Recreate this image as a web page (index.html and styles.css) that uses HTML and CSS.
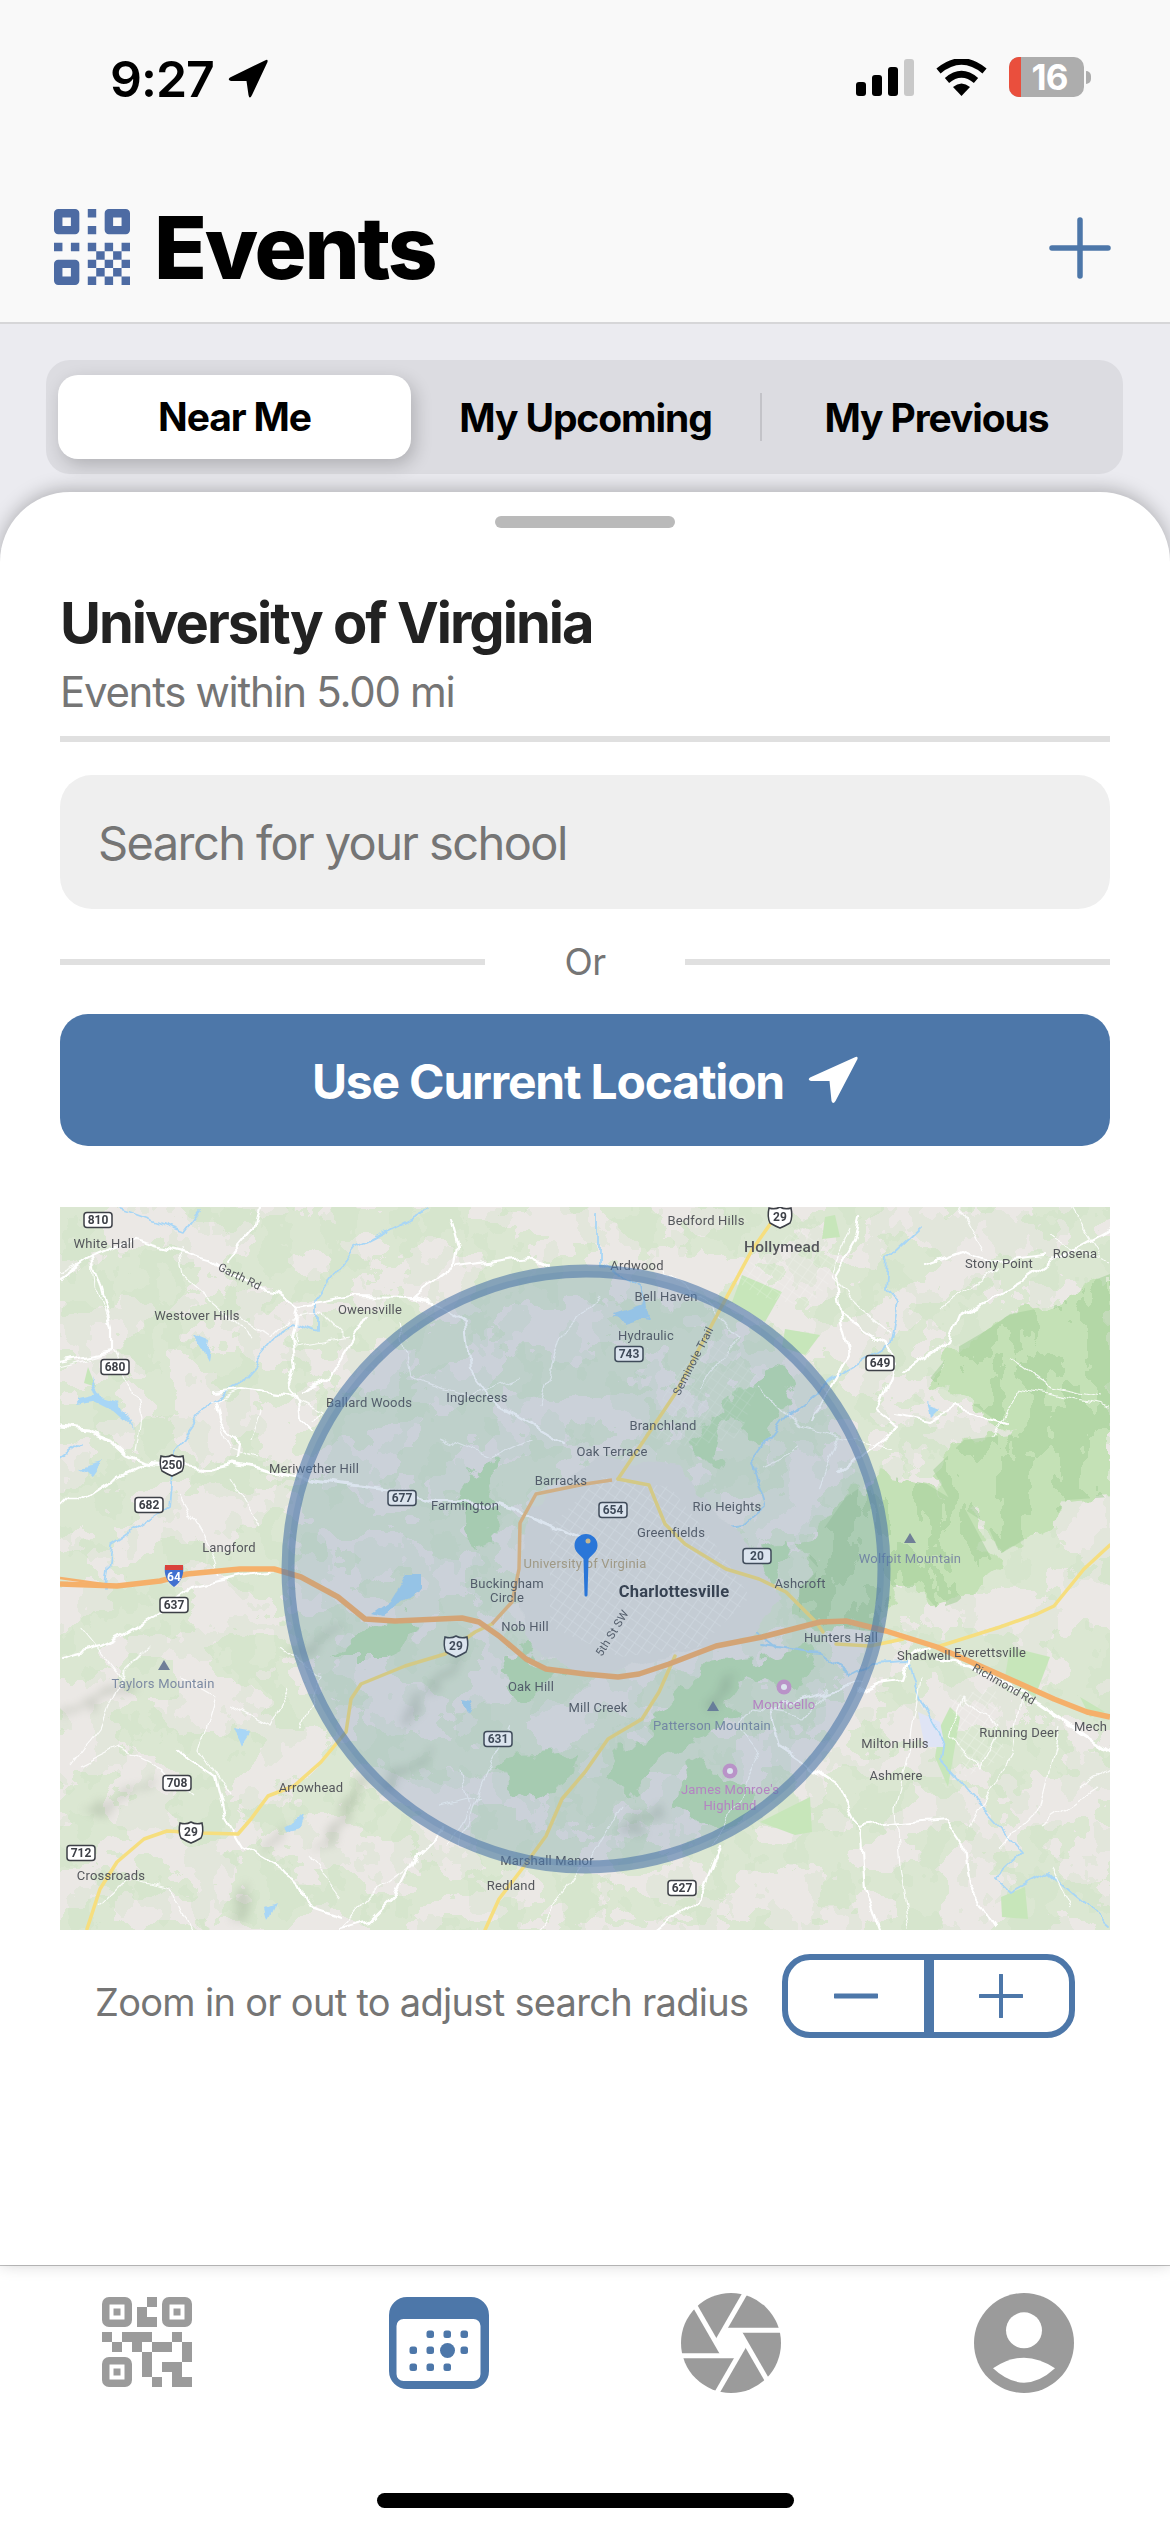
FILE: index.html
```html
<!DOCTYPE html>
<html lang="en">
<head>
    <meta charset="UTF-8">
    <meta name="viewport" content="width=device-width, initial-scale=1.0">
    <title>Events</title>
    <link rel="stylesheet" href="styles.css">
</head>
<body>
    <div class="top-bar">
        <div class="status-bar">
            <div class="status-time">
                <span>9:27</span>
                <svg class="status-arrow" viewBox="0 0 40 40"><path d="M38 1 Q40 0 39.500 3 L24 36 Q21.500 41 20.500 36 L18.500 22 L3 22 Q-1 21 2 18.500 Z"/></svg>
            </div>
            <div class="status-icons">
                <svg class="signal" viewBox="0 0 58 37">
                    <rect x="0" y="23" width="10" height="14" rx="3"/>
                    <rect x="16" y="16" width="10" height="21" rx="3"/>
                    <rect x="32" y="8" width="10" height="29" rx="3"/>
                    <rect x="48" y="0" width="10" height="37" rx="3" fill="#c9c9c9"/>
                </svg>
                <svg class="wifi" viewBox="0 0 51 37">
                    <path d="M2.500 12 Q25.500 -7 48.500 12" fill="none" stroke="#000" stroke-width="6.500"/>
                    <path d="M11 21.500 Q25.500 9 40 21.500" fill="none" stroke="#000" stroke-width="6.500"/>
                    <path d="M17 28 Q25.500 21 34 28 L25.500 37 Z"/>
                </svg>
                <div class="battery">
                    <div class="battery-body"><span class="battery-low"></span><span class="battery-num">16</span></div>
                    <span class="battery-nub"></span>
                </div>
            </div>
        </div>
        <div class="title-row">
            <div class="title-left">
                <svg class="logo" viewBox="0 0 9 9">
                    <path fill-rule="evenodd" d="M.5 0h2a.5.5 0 0 1 .5.5v2a.5.500 0 0 1-.5.5h-2a.5.5 0 0 1-.5-.5v-2a.5.5 0 0 1 .5-.5zM1 1v1h1V1z"/>
                    <path fill-rule="evenodd" d="M6.500 0h2a.5.5 0 0 1 .5.5v2a.5.500 0 0 1-.5.5h-2a.5.5 0 0 1-.5-.5v-2a.5.5 0 0 1 .5-.5zM7 1v1h1V1z"/>
                    <path fill-rule="evenodd" d="M.5 6h2a.5.5 0 0 1 .5.5v2a.5.500 0 0 1-.5.5h-2a.5.5 0 0 1-.5-.5v-2a.5.5 0 0 1 .5-.5zM1 7v1h1V7z"/>
                    <path d="M4 0h1v1H4zM4 2h1v1H4zM0 4h1v1H0zM2 4h1v1H2zM4 4h1v1H4zM6 4h1v1H6zM8 4h1v1H8zM5 5h1v1H5zM7 5h1v1H7zM4 6h1v1H4zM6 6h1v1H6zM8 6h1v1H8zM5 7h1v1H5zM7 7h1v1H7zM4 8h1v1H4zM6 8h1v1H6zM8 8h1v1H8z"/>
                </svg>
                <h1>Events</h1>
            </div>
            <svg class="add-icon" viewBox="0 0 62 62"><path d="M31 3V59M3 31H59" fill="none" stroke="#4d77a9" stroke-width="5.500" stroke-linecap="round"/></svg>
        </div>
    </div>

    <div class="segment-wrap">
        <div class="segment">
            <div class="segment-item active">Near Me</div>
            <div class="segment-item upcoming">My Upcoming</div>
            <span class="segment-divider"></span>
            <div class="segment-item previous">My Previous</div>
        </div>
    </div>

    <div class="sheet">
        <div class="handle"></div>
        <h2>University of Virginia</h2>
        <p class="radius-text">Events within 5.00 mi</p>
        <div class="rule"></div>
        <div class="search-box">Search for your school</div>
        <div class="or-row">
            <span class="or-line"></span>
            <span class="or-text">Or</span>
            <span class="or-line"></span>
        </div>
        <button class="location-btn">
            <span>Use Current Location</span>
            <svg class="nav-arrow" viewBox="0 0 50 48"><path d="M47.500 1 Q50 0 49.500 3 L27.500 45 Q25 49 23.500 45 L21.500 25 L3 25 Q-1 24 2 21.500 Z"/></svg>
        </button>

        <svg class="map" viewBox="0 0 1050 723">
            <defs>
                <filter id="patches" filterUnits="userSpaceOnUse" x="0" y="0" width="1050" height="723" color-interpolation-filters="sRGB">
                    <feTurbulence type="fractalNoise" baseFrequency="0.017 0.021" numOctaves="4" seed="11"/>
                    <feColorMatrix values="0 0 0 0 0.86  0 0 0 0 0.906  0 0 0 0 0.825  1 0 0 0 0"/>
                    <feComponentTransfer><feFuncA type="discrete" tableValues="0 1"/></feComponentTransfer>
                </filter>
                <filter id="patches-deep" filterUnits="userSpaceOnUse" x="0" y="0" width="1050" height="723" color-interpolation-filters="sRGB">
                    <feTurbulence type="fractalNoise" baseFrequency="0.03 0.024" numOctaves="4" seed="23"/>
                    <feColorMatrix values="0 0 0 0 0.78  0 0 0 0 0.87  0 0 0 0 0.74  1.2 0 0 0 -0.15"/>
                    <feComponentTransfer><feFuncA type="discrete" tableValues="0 0.25"/></feComponentTransfer>
                </filter>
                <filter id="forest-tone" filterUnits="userSpaceOnUse" x="0" y="0" width="1050" height="723" color-interpolation-filters="sRGB">
                    <feTurbulence type="fractalNoise" baseFrequency="0.035 0.02" numOctaves="4" seed="7"/>
                    <feColorMatrix values="0 0 0 0 0.66  0 0 0 0 0.82  0 0 0 0 0.61  1 0 0 0 0"/>
                    <feComponentTransfer><feFuncA type="discrete" tableValues="0 0.6"/></feComponentTransfer>
                </filter>
                <filter id="rough" filterUnits="userSpaceOnUse" x="0" y="0" width="1050" height="723" color-interpolation-filters="sRGB">
                    <feTurbulence type="fractalNoise" baseFrequency="0.04" numOctaves="3" seed="5" result="n"/>
                    <feDisplacementMap in="SourceGraphic" in2="n" scale="34" xChannelSelector="R" yChannelSelector="G"/>
                </filter>
                <filter id="wiggle" filterUnits="userSpaceOnUse" x="0" y="0" width="1050" height="723" color-interpolation-filters="sRGB">
                    <feTurbulence type="fractalNoise" baseFrequency="0.045" numOctaves="2" seed="9" result="n"/>
                    <feDisplacementMap in="SourceGraphic" in2="n" scale="14" xChannelSelector="R" yChannelSelector="G"/>
                </filter>
                <filter id="shade" filterUnits="userSpaceOnUse" x="0" y="0" width="1050" height="723" color-interpolation-filters="sRGB">
                    <feTurbulence type="fractalNoise" baseFrequency="0.05" numOctaves="3" seed="3" result="n"/>
                    <feDisplacementMap in="SourceGraphic" in2="n" scale="26" xChannelSelector="R" yChannelSelector="G"/>
                    <feGaussianBlur stdDeviation="4"/>
                </filter>
                <filter id="soft"><feGaussianBlur stdDeviation="0.5"/></filter>
                <pattern id="grid" width="9" height="9" patternUnits="userSpaceOnUse" patternTransform="rotate(35)">
                    <path d="M0 0H9M0 0V9" stroke="#fff" stroke-width="1.200"/>
                </pattern>
                <clipPath id="forest-clip">
                    <path d="M927 123L950 107L1001 97L1024 77L1050 67V290L1007 293L991 317L940 347L927 317L890 293L873 263L904 233L954 227L917 200L863 180L893 143Z"/>
                    <path d="M820 267L867 277L904 300L937 362L923 372L897 395L877 402L860 382L837 382L820 425L759 419L739 405L739 382L759 362L733 333L760 327L786 290Z"/>
                </clipPath>
                <g id="rd"><rect x="-14" y="-7.500" width="28" height="15" rx="3" fill="#fff" stroke="#3c3f46" stroke-width="1.500"/></g>
                <g id="us"><path d="M-11 -9Q-5 -7 0 -10Q5 -7 11 -9Q13 0 10 6Q5 9 0 11Q-5 9 -10 6Q-13 0 -11 -9Z" fill="#fff" stroke="#3c3f46" stroke-width="1.500"/></g>
                <g id="peak"><path d="M-6 4L0 -6L6 4Z" fill="#6f7f97"/></g>
                <g id="poi"><circle r="7.500" fill="#d59ad0"/><circle r="3" fill="#fff"/></g>
            </defs>

            <g filter="url(#soft)">
                <rect width="1050" height="723" fill="#ebe8e5"/>
                <rect width="1050" height="723" filter="url(#patches)"/>
                <rect width="1050" height="723" filter="url(#patches-deep)"/>

                <!-- forests -->
                <g filter="url(#rough)" fill="#c4e1b6">
                    <path d="M927 123L950 107L1001 97L1024 77L1050 67V290L1007 293L991 317L940 347L927 317L890 293L873 263L904 233L954 227L917 200L863 180L893 143Z"/>
                    <path d="M820 267L867 277L904 300L937 362L923 372L897 395L877 402L860 382L837 382L820 425L759 419L739 405L739 382L759 362L733 333L760 327L786 290Z"/>
                </g>
                <rect width="1050" height="723" clip-path="url(#forest-clip)" filter="url(#forest-tone)"/>
                <g filter="url(#rough)" fill="#bde0b3">
                    <path d="M445 552L520 545L510 575L470 593L432 560Z"/>
                    <path d="M545 565L610 500L650 455L745 445L762 460L720 480L690 470L660 490L680 510L640 530L600 550L570 595Z"/>
                    <path d="M630 555L695 585L680 620L610 600Z"/>
                    <path d="M330 450L365 415L345 405L295 430L270 450Z"/>
                    <path d="M455 440L500 465L475 495L445 470Z"/>
                    <path d="M630 240L670 190L720 160L735 185L700 240L665 215L650 260Z"/>
                    <path d="M400 290L430 250L440 310L415 345Z"/>
                    <path d="M695 360L720 330L730 350L715 380Z"/>
                </g>
                <g fill="#c7e6ba">
                    <path d="M682 68L722 85L705 115L672 95Z"/>
                    <path d="M725 122L760 128L745 148L722 140Z"/>
                    <path d="M765 10L775 8L780 30L762 32Z"/>
                    <path d="M700 615L750 590L752 625L735 628Z"/>
                    <path d="M941 690L965 680L968 712L942 710Z"/>
                    <path d="M880 520L890 500L900 510L888 580L875 550Z"/>
                    <path d="M950 440L990 450L975 490L945 470Z"/>
                    <path d="M1020 490L1045 505L1030 510Z"/>
                    <path d="M28 160L36 180L24 176Z"/>
                </g>

                <!-- hill shading -->
                <g filter="url(#shade)" fill="none" stroke="#75846e" stroke-linecap="round" opacity="0.24">
                    <path d="M305 570L262 640" stroke-width="10"/>
                    <path d="M370 545L325 580" stroke-width="9"/>
                    <path d="M345 515L400 450" stroke-width="8"/>
                    <path d="M235 450L280 420" stroke-width="9"/>
                    <path d="M0 510L70 480" stroke-width="9"/>
                    <path d="M600 600L565 625" stroke-width="10"/>
                    <path d="M650 505L668 475" stroke-width="9"/>
                    <path d="M180 710L185 680" stroke-width="7"/>
                    <path d="M30 605L90 575" stroke-width="7"/>
                    <path d="M230 620L210 640" stroke-width="6"/>
                </g>

                <!-- water -->
                <g fill="#a8d6f6" filter="url(#wiggle)">
                    <path d="M30 166L44 190L60 195L72 220L55 205L35 195L15 198L20 192L38 188Z"/>
                    <path d="M133 127L150 134L147 153L140 140Z"/>
                    <path d="M312 405L330 392L345 368L362 368L362 382L340 396L322 408Z"/>
                    <path d="M175 520L192 523L182 538Z"/>
                    <path d="M224 618L242 608L238 622L226 625Z"/>
                    <path d="M18 262L42 256L32 270Z"/>
                    <path d="M400 490L414 492L408 508Z"/>
                    <path d="M868 195L880 200L872 208Z"/>
                    <path d="M205 700L215 696L208 712Z"/>
                    <path d="M536 370L548 365L544 380Z"/>
                    <path d="M555 105L585 95L590 110L565 118Z"/>
                </g>
                <path d="M858 505L880 515L885 540L865 540Z" fill="#dfe4f5"/>
                <g fill="none" stroke="#a8d6f6" stroke-width="1.800" stroke-linejoin="round" stroke-linecap="round" filter="url(#wiggle)">
                    <path d="M702 437L759 445L790 469L813 457L847 455L860 489L883 532L880 552L904 579L964 645L935 672L950 685L987 665L1050 719"/>
                    <path d="M538 10L538 57L582 80L589 113L555 108"/>
                    <path d="M860 20L828 50L826 83L838 97L830 137L770 173L726 210L692 257L706 300L682 320L659 323L639 310"/>
                    <path d="M368 3L295 40L255 93L255 123L232 113L180 175L150 195L115 245"/>
                    <path d="M55 0L125 25L140 5"/>
                    <path d="M680 380L690 420L715 440"/>
                    <path d="M0 250L20 235M115 245L110 300L50 340L45 380"/>
                </g>

                <!-- city -->
                <path d="M470 300L540 250L620 260L650 300L690 340L720 390L690 430L600 450L530 470L470 440L455 380Z" fill="#e3e2df" filter="url(#wiggle)"/>
                <path d="M490 320L540 270L610 280L650 330L690 390L640 440L560 450L490 420Z" fill="url(#grid)" opacity="0.55"/>
                <path d="M610 170L660 130L700 170L680 230L630 240L590 230Z" fill="url(#grid)" opacity="0.3"/>
                <path d="M670 70L740 20L790 50L750 100L700 90Z" fill="url(#grid)" opacity="0.3"/>
                <path d="M890 490L935 480L945 550L905 570Z" fill="url(#grid)" opacity="0.4"/>

                <!-- minor roads -->
                <g fill="none" stroke="#fff" stroke-width="1.200" stroke-linejoin="round" opacity="0.85" filter="url(#wiggle)">
                    <path d="M0 66L33 50L35 80L52 120L52 145L20 155L0 160"/>
                    <path d="M52 145L75 190L80 210L75 245"/>
                    <path d="M120 40L125 70L160 100L190 130"/>
                    <path d="M180 110L210 130L230 110M232 110L260 105L285 130"/>
                    <path d="M290 130L235 140L238 99"/>
                    <path d="M150 195L180 182L230 190L260 205L255 215"/>
                    <path d="M160 215L170 240L195 250M200 200L190 235"/>
                    <path d="M120 290L150 340L160 370M170 270L200 320"/>
                    <path d="M20 560L60 540L100 560L135 590"/>
                    <path d="M120 470L155 490L140 540L170 590"/>
                    <path d="M340 115L350 170L410 190L460 170M380 230L430 250L470 230"/>
                    <path d="M790 20L770 70L800 100L830 125"/>
                    <path d="M950 150L990 180L1040 190M880 100L940 60"/>
                    <path d="M930 230L960 180L1050 200M900 0L925 45"/>
                    <path d="M990 30L1050 55M1010 0L1040 50"/>
                    <path d="M860 470L850 540L835 600L840 660L850 723"/>
                    <path d="M960 490L950 550L910 620M1000 520L980 600L940 640M1020 580L1050 560"/>
                    <path d="M940 520L920 560L890 530L905 490Z"/>
                    <path d="M770 480L745 510L690 500L680 520M680 520L700 545L680 590L650 640"/>
                    <path d="M400 560L410 600L390 640M350 660L310 690L280 723"/>
                    <path d="M560 600L530 650L500 690L480 723"/>
                    <path d="M980 620L1040 580M990 660L1010 700"/>
                    <path d="M450 520L420 580L400 640M420 590L380 600"/>
                    <path d="M600 60L640 90L680 130L640 180M540 90L500 130L480 200"/>
                    <path d="M700 180L740 220L780 230L760 280M700 260L740 240M780 230L830 240"/>
                    <path d="M20 420L60 470L40 520L10 560M60 470L90 440"/>
                    <path d="M220 440L260 470L240 520M170 500L210 520L230 480"/>
                    <path d="M40 700L70 670L110 680L130 723M250 650L280 690"/>
                </g>

                <!-- main white roads -->
                <g fill="none" stroke="#fff" stroke-width="2.200" stroke-linejoin="round" stroke-linecap="round" filter="url(#wiggle)">
                    <path d="M877 454L910 459L977 495L1050 545" stroke-width="3"/>
                    <path d="M0 220L27 223L50 232L67 248L84 256L151 262L174 257L234 270L328 283L375 295L435 297L469 308L525 333" stroke-width="3"/>
                    <path d="M0 295L17 295L44 277L84 257" stroke-width="2.500"/>
                    <path d="M72 32L114 43L151 53L198 82L218 85L238 99L291 89L355 90L375 95L405 113L410 164L435 198L503 238"/>
                    <path d="M0 72L30 50L72 32M33 50L52 120L52 145M0 155L52 145"/>
                    <path d="M238 99L232 130L236 165L230 180L238 195L240 210L255 225"/>
                    <path d="M240 185L270 172L290 140L308 110M152 185L180 182L205 186L235 190"/>
                    <path d="M155 195L160 215L180 235L178 250"/>
                    <path d="M168 53L195 20L200 0"/>
                    <path d="M355 90L395 60L398 40L390 10M398 60L470 50L490 60"/>
                    <path d="M132 380L100 405L60 430L40 440L0 450"/>
                    <path d="M132 380L200 365L225 362"/>
                    <path d="M120 545L155 570L165 610L183 640L235 670L250 700L280 710"/>
                    <path d="M280 723L310 715L335 690L355 650L385 620"/>
                    <path d="M805 475L770 485L720 497L710 505L720 540L780 580L800 620L830 615L885 610L905 640L910 680L935 720"/>
                    <path d="M800 620L805 680L820 723"/>
                    <path d="M800 485L820 475L842 472L850 450L870 440"/>
                    <path d="M752 215L790 145L780 105L825 135L835 155"/>
                    <path d="M835 155L815 205L835 220L800 250L778 265"/>
                    <path d="M835 205L870 212L895 200L945 215"/>
                    <path d="M845 165L890 135L900 110L960 75L990 55L1050 22"/>
                    <path d="M865 58L900 45L930 55L985 48"/>
                    <path d="M780 105L775 70L795 35L800 10"/>
                    <path d="M590 730L640 690L660 640"/>
                </g>

                <!-- yellow roads and the interstate -->
                <g fill="none" stroke="#f6de7e" stroke-width="3.500" stroke-linejoin="round" stroke-linecap="round">
                    <path d="M432 417L415 425L385 447L345 459L301 477L291 492L286 525L261 555L234 579L208 589L191 612L178 627L141 626L107 624L84 632L57 655L40 682L27 722"/>
                    <path d="M558 272L615 187L649 123L692 43L713 13"/>
                    <path d="M558 272L589 278L605 317L625 337L666 362L699 372L726 385L756 415L763 425"/>
                    <path d="M776 437L810 439L843 432"/>
                    <path d="M880 439L940 420L977 407L994 399L1024 362L1050 338"/>
                    <path d="M615 449L599 485L582 512L548 532L525 565L502 592L486 629L462 662L439 692L425 723"/>
                </g>
                <path d="M432 417L452 395L459 362L460 316L476 287L525 277L552 273" fill="none" stroke="#f2bd7c" stroke-width="3.500" stroke-linejoin="round"/>
                <path d="M0 377L57 379L100 374L127 367L180 362L214 362L221 364L241 370L278 390L305 412L335 414L402 411L419 415L439 429L466 452L486 462L525 467L558 470L579 467L609 457L656 439L702 430L760 415L786 414L826 424L877 440L927 462L994 492L1027 505L1050 510" fill="none" stroke="#f5b06b" stroke-width="5.500" stroke-linejoin="round"/>
                <path d="M0 371L57 379" fill="none" stroke="#f5b06b" stroke-width="2.500"/>

                <!-- labels -->
                <g class="map-label">
                    <text x="44" y="41">White Hall</text>
                    <text x="178" y="73" class="small" transform="rotate(26 178 73)">Garth Rd</text>
                    <text x="137" y="113">Westover Hills</text>
                    <text x="310" y="107">Owensville</text>
                    <text x="309" y="200">Ballard Woods</text>
                    <text x="417" y="195">Inglecress</text>
                    <text x="254" y="266">Meriwether Hill</text>
                    <text x="405" y="303">Farmington</text>
                    <text x="169" y="345">Langford</text>
                    <text x="501" y="278">Barracks</text>
                    <text x="646" y="18">Bedford Hills</text>
                    <text x="722" y="45" class="big">Hollymead</text>
                    <text x="577" y="63">Ardwood</text>
                    <text x="606" y="94">Bell Haven</text>
                    <text x="586" y="133">Hydraulic</text>
                    <text x="939" y="61">Stony Point</text>
                    <text x="1015" y="51">Rosena</text>
                    <text x="603" y="223">Branchland</text>
                    <text x="552" y="249">Oak Terrace</text>
                    <text x="667" y="304">Rio Heights</text>
                    <text x="611" y="330">Greenfields</text>
                    <text x="633" y="158" class="small" transform="rotate(-63 633 154)">Seminole Trail</text>
                    <text x="447" y="381">Buckingham</text>
                    <text x="447" y="395">Circle</text>
                    <text x="465" y="424">Nob Hill</text>
                    <text x="471" y="484">Oak Hill</text>
                    <text x="538" y="505">Mill Creek</text>
                    <text x="251" y="585">Arrowhead</text>
                    <text x="51" y="673">Crossroads</text>
                    <text x="487" y="658">Marshall Manor</text>
                    <text x="451" y="683">Redland</text>
                    <text x="614" y="390" class="city">Charlottesville</text>
                    <text x="740" y="381">Ashcroft</text>
                    <text x="552" y="430" class="small" transform="rotate(-58 552 426)">5th St SW</text>
                    <text x="781" y="435">Hunters Hall</text>
                    <text x="864" y="453">Shadwell</text>
                    <text x="930" y="450">Everettsville</text>
                    <text x="944" y="481" class="small" transform="rotate(30 944 477)">Richmond Rd</text>
                    <text x="835" y="541">Milton Hills</text>
                    <text x="959" y="530">Running Deer</text>
                    <text x="1014" y="524" class="start">Mech</text>
                    <text x="836" y="573">Ashmere</text>
                    <text x="103" y="481" class="peak-label">Taylors Mountain</text>
                    <text x="850" y="356" class="peak-label">Wolfpit Mountain</text>
                    <text x="652" y="523" class="peak-label">Patterson Mountain</text>
                    <text x="724" y="502" class="poi-label">Monticello</text>
                    <text x="670" y="587" class="poi-label">James Monroe's</text>
                    <text x="670" y="603" class="poi-label">Highland</text>
                    <text x="525" y="361" class="campus-label">University of Virginia</text>
                </g>
                <use href="#peak" x="104" y="459"/>
                <use href="#peak" x="850" y="332"/>
                <use href="#peak" x="653" y="500"/>
                <use href="#poi" x="724" y="480"/>
                <use href="#poi" x="670" y="564"/>

                <!-- road shields -->
                <g class="shield-label">
                    <use href="#rd" x="38" y="13"/><text x="38" y="17">810</text>
                    <use href="#rd" x="55" y="160"/><text x="55" y="164">680</text>
                    <use href="#rd" x="89" y="298"/><text x="89" y="302">682</text>
                    <use href="#rd" x="342" y="291"/><text x="342" y="295">677</text>
                    <use href="#rd" x="569" y="147"/><text x="569" y="151">743</text>
                    <use href="#rd" x="820" y="156"/><text x="820" y="160">649</text>
                    <use href="#rd" x="553" y="303"/><text x="553" y="307">654</text>
                    <use href="#rd" x="697" y="349"/><text x="697" y="353">20</text>
                    <use href="#rd" x="114" y="398"/><text x="114" y="402">637</text>
                    <use href="#rd" x="438" y="532"/><text x="438" y="536">631</text>
                    <use href="#rd" x="117" y="576"/><text x="117" y="580">708</text>
                    <use href="#rd" x="21" y="646"/><text x="21" y="650">712</text>
                    <use href="#rd" x="622" y="681"/><text x="622" y="685">627</text>
                    <use href="#us" x="112" y="258"/><text x="112" y="262">250</text>
                    <use href="#us" x="720" y="10"/><text x="720" y="14">29</text>
                    <use href="#us" x="396" y="439"/><text x="396" y="443">29</text>
                    <use href="#us" x="131" y="625"/><text x="131" y="629">29</text>
                    <path d="M105 358H123Q125 372 114 380Q103 372 105 358Z" fill="#3f6fd0"/>
                    <path d="M105 358H123V363H105Z" fill="#d9433a"/>
                    <text x="114" y="374" class="interstate">64</text>
                </g>
            </g>

            <circle class="radius-circle" cx="526" cy="362" r="298"/>

            <path class="pin" d="M526 327a11.500 11.500 0 0 1 11.500 11.500c0 6-5 9-9 13.500L527.500 388a1.500 1.500 0 0 1-3 0L523.500 352c-4-4.500-9-7.500-9-13.500A11.500 11.500 0 0 1 526 327z"/>
            <circle cx="528" cy="334" r="2.500" fill="#c7b790"/>
        </svg>

        <div class="zoom-row">
            <span class="zoom-text">Zoom in or out to adjust search radius</span>
            <div class="stepper">
                <div class="stepper-btn minus"><svg viewBox="0 0 44 40"><path d="M1 20H43" stroke="#4d77a9" stroke-width="5" stroke-linecap="round"/></svg></div>
                <div class="stepper-btn"><svg viewBox="0 0 44 44"><path d="M22 1V43M1 22H43" stroke="#4d77a9" stroke-width="4" stroke-linecap="round"/></svg></div>
            </div>
        </div>
    </div>

    <div class="tab-bar">
        <svg class="tab-icon qr" viewBox="0 0 90 92">
            <path fill-rule="evenodd" d="M7 0h16a7 7 0 0 1 7 7v16a7 7 0 0 1-7 7H7a7 7 0 0 1-7-7V7a7 7 0 0 1 7-7zM7.500 7.500v15h15v-15zM11.500 11.500h7v7h-7z"/>
            <path fill-rule="evenodd" d="M67 0h16a7 7 0 0 1 7 7v16a7 7 0 0 1-7 7H67a7 7 0 0 1-7-7V7a7 7 0 0 1 7-7zM67.500 7.500v15h15v-15zM71.500 11.500h7v7h-7z"/>
            <path fill-rule="evenodd" d="M7 60h16a7 7 0 0 1 7 7v16a7 7 0 0 1-7 7H7a7 7 0 0 1-7-7V67a7 7 0 0 1 7-7zM7.500 67.500v15h15v-15zM11.500 71.500h7v7h-7z"/>
            <path d="M45 0h10v10H45zM35 10h10v10H35zM35 20h20v10H35zM0 35h10v10H0zM20 35h30v10H20zM70 35h10v10H70zM10 45h10v10H10zM30 45h10v10H30zM50 45h20v10H50zM80 45h10v20H80zM40 55h10v25H40zM60 65h20v10H60zM70 75h10v5H70zM70 80h20v10H70zM50 80h10v10H50z"/>
        </svg>
        <svg class="tab-icon calendar" viewBox="0 0 100 92">
            <path fill-rule="evenodd" d="M18 0h64a18 18 0 0 1 18 18v56a18 18 0 0 1-18 18H18A18 18 0 0 1 0 74V18A18 18 0 0 1 18 0zM14.500 22a7 7 0 0 0-7 7v48a7 7 0 0 0 7 7h70a7 7 0 0 0 7-7V29a7 7 0 0 0-7-7z"/>
            <rect x="37.500" y="33.500" width="7.500" height="7.500" rx="2.500"/><rect x="54.500" y="33.500" width="7.500" height="7.500" rx="2.500"/><rect x="71.500" y="33.500" width="7.500" height="7.500" rx="2.500"/>
            <rect x="20.500" y="49.500" width="7.500" height="7.500" rx="2.500"/><rect x="37.500" y="49.500" width="7.500" height="7.500" rx="2.500"/><circle cx="58.500" cy="53.500" r="7.500"/><rect x="71.500" y="49.500" width="7.500" height="7.500" rx="2.500"/>
            <rect x="20.500" y="66.500" width="7.500" height="7.500" rx="2.500"/><rect x="37.500" y="66.500" width="7.500" height="7.500" rx="2.500"/><rect x="54.500" y="66.500" width="7.500" height="7.500" rx="2.500"/>
        </svg>
        <svg class="tab-icon shutter" viewBox="0 0 100 100">
            <circle cx="50" cy="50" r="50"/>
            <g transform="translate(50 50)" stroke="#fff" stroke-width="5">
                <polygon points="-14.700,0 -7.300,-12.700 7.300,-12.700 14.700,0 7.300,12.700 -7.300,12.700" fill="#fff" stroke="none"/>
                <path d="M-7.300 -12.700H54"/>
                <path d="M-7.300 -12.700H54" transform="rotate(60)"/>
                <path d="M-7.300 -12.700H54" transform="rotate(120)"/>
                <path d="M-7.300 -12.700H54" transform="rotate(180)"/>
                <path d="M-7.300 -12.700H54" transform="rotate(240)"/>
                <path d="M-7.300 -12.700H54" transform="rotate(300)"/>
            </g>
        </svg>
        <svg class="tab-icon profile" viewBox="0 0 100 100">
            <circle cx="50" cy="50" r="50"/>
            <circle cx="50" cy="37.300" r="18" fill="#fff"/>
            <path d="M19 75.300Q50 54 81 75.300Q50 104 19 75.300Z" fill="#fff"/>
        </svg>
    </div>
    <div class="home-area"><div class="home-indicator"></div></div>
</body>
</html>
```

FILE: styles.css
```css
* {
    box-sizing: border-box;
}

body {
    margin: 0;
    width: 1170px;
    height: 2532px;
    overflow: hidden;
    font-family: Inter, 'Liberation Sans', sans-serif;
    background-color: #ebebf0;
    display: flex;
    flex-direction: column;
}

.top-bar {
    height: 324px;
    background-color: #f9f9f9;
    border-bottom: 2px solid #d6d6d8;
}

.status-bar {
    height: 150px;
    padding: 0 79px 0 110px;
    display: flex;
    justify-content: space-between;
    align-items: flex-start;
}

.status-time {
    margin-top: 53px;
    display: flex;
    align-items: center;
    gap: 14px;
    font-size: 50px;
    line-height: 52px;
    font-weight: 600;
    color: #000;
    letter-spacing: -1px;
}

.status-arrow {
    width: 40px;
    height: 40px;
}

.status-icons {
    margin-top: 57px;
    display: flex;
    align-items: center;
    gap: 22px;
}

.signal {
    width: 58px;
    height: 37px;
}

.wifi {
    width: 51px;
    height: 37px;
}

.battery {
    display: flex;
    align-items: center;
    gap: 2px;
}

.battery-body {
    position: relative;
    width: 75px;
    height: 40px;
    border-radius: 10px;
    background-color: #adadad;
    text-align: center;
}

.battery-low {
    position: absolute;
    left: 0;
    top: 0;
    bottom: 0;
    width: 12px;
    border-radius: 10px 0 0 10px;
    background-color: #ea4f3d;
}

.battery-num {
    position: relative;
    left: 3px;
    font-size: 35px;
    line-height: 40px;
    font-weight: 700;
    letter-spacing: -1px;
    color: #fff;
}

.battery-nub {
    width: 5px;
    height: 13px;
    border-radius: 0 6px 6px 0;
    background-color: #adadad;
}

.title-row {
    padding: 0 59px 0 54px;
    margin-top: 52px;
    display: flex;
    justify-content: space-between;
    align-items: center;
}

.title-left {
    display: flex;
    align-items: center;
    gap: 24px;
}

.logo {
    width: 76px;
    height: 76px;
    margin-top: -2px;
    fill: #4d6ba3;
}

h1 {
    margin: 0;
    font-size: 87px;
    line-height: 92px;
    font-weight: 800;
    letter-spacing: -2.300px;
    color: #000;
}

.add-icon {
    width: 62px;
    height: 62px;
}

.segment-wrap {
    height: 168px;
    padding: 36px 47px 0 46px;
}

.segment {
    height: 114px;
    padding: 15px 12px;
    border-radius: 24px;
    background-color: #dcdce1;
    display: flex;
    align-items: center;
}

.segment-item {
    font-size: 39px;
    font-weight: 700;
    letter-spacing: -1.100px;
    color: #000;
    text-align: center;
}

.segment-item.active {
    width: 353px;
    height: 84px;
    line-height: 84px;
    background-color: #fff;
    border-radius: 20px;
    box-shadow: 4px 6px 18px rgba(0, 0, 0, 0.2);
}

.segment-item.upcoming {
    width: 349px;
}

.segment-item.previous {
    flex: 1;
}

.segment-divider {
    width: 2px;
    height: 48px;
    background-color: #c3c3c8;
}

.sheet {
    position: relative;
    height: 1773px;
    padding: 24px 60px 0;
    background-color: #fff;
    border-radius: 70px 70px 0 0;
    box-shadow: 0 -3px 18px rgba(0, 0, 0, 0.25);
}

.handle {
    width: 180px;
    height: 12px;
    margin: 0 auto;
    border-radius: 6px;
    background-color: #bababa;
}

h2 {
    margin: 62px 0 0;
    font-size: 56px;
    line-height: 66px;
    font-weight: 700;
    letter-spacing: -2px;
    color: #222;
}

.radius-text {
    margin: 12px 0 0;
    font-size: 42px;
    line-height: 48px;
    letter-spacing: -1.300px;
    color: #757575;
}

.rule {
    height: 6px;
    margin-top: 20px;
    background-color: #e0e0e0;
}

.search-box {
    height: 134px;
    margin-top: 33px;
    padding-left: 38px;
    border-radius: 32px;
    background-color: #efefef;
    font-size: 47px;
    line-height: 136px;
    letter-spacing: -1.600px;
    color: #757575;
}

.or-row {
    height: 105px;
    display: flex;
    align-items: center;
}

.or-line {
    flex: 1;
    height: 6px;
    background-color: #e0e0e0;
}

.or-text {
    width: 200px;
    text-align: center;
    font-size: 37px;
    letter-spacing: -0.500px;
    color: #757575;
}

.location-btn {
    width: 100%;
    height: 132px;
    border: none;
    padding: 0;
    border-radius: 28px;
    background-color: #4d77a9;
    color: #fff;
    font-family: inherit;
    font-size: 48px;
    font-weight: 700;
    letter-spacing: -1.200px;
    display: flex;
    align-items: center;
    justify-content: center;
    gap: 24px;
}

.location-btn span {
    margin-top: 3px;
}

.nav-arrow {
    width: 50px;
    height: 48px;
    fill: #fff;
}

.map {
    display: block;
    width: 1050px;
    height: 723px;
    margin-top: 61px;
}

.map-label text {
    font-family: Roboto, sans-serif;
    font-size: 13px;
    fill: #55575c;
    text-anchor: middle;
    letter-spacing: 0.200px;
}

.map-label .small {
    font-size: 11.500px;
}

.map-label .big {
    font-size: 15.500px;
    font-weight: 500;
}

.map-label .city {
    font-size: 16.500px;
    font-weight: 700;
    fill: #30343c;
}

.map-label .start {
    text-anchor: start;
}

.map-label .peak-label {
    fill: #7d8ba3;
}

.map-label .poi-label {
    fill: #cf86c9;
}

.map-label .campus-label {
    fill: #b5a27d;
}

.shield-label text {
    font-family: Roboto, sans-serif;
    font-size: 12px;
    font-weight: 700;
    fill: #3c3f46;
    text-anchor: middle;
}

.shield-label .interstate {
    fill: #fff;
}

.radius-circle {
    fill: rgba(77, 119, 169, 0.2);
    stroke: rgba(77, 119, 169, 0.6);
    stroke-width: 13;
}

.pin {
    fill: #2a76d8;
}

.zoom-row {
    margin-top: 24px;
    padding: 0 35px;
    display: flex;
    align-items: center;
    justify-content: space-between;
}

.zoom-text {
    font-size: 38px;
    letter-spacing: -0.700px;
    color: #757575;
    margin-top: 12px;
}

.stepper {
    width: 293px;
    height: 84px;
    border: 6px solid #4d77a9;
    border-radius: 28px;
    display: flex;
}

.stepper-btn {
    flex: 1;
    display: flex;
    align-items: center;
    justify-content: center;
}

.stepper-btn.minus {
    border-right: 10px solid #4d77a9;
}

.stepper-btn svg {
    width: 44px;
    height: 44px;
}

.tab-bar {
    height: 168px;
    padding-top: 27px;
    background-color: #fff;
    border-top: 1px solid #c4c4c4;
    display: grid;
    grid-template-columns: 293px 291px 293px 293px;
    justify-items: center;
    align-items: start;
}

.tab-icon {
    display: block;
    width: 100px;
    height: 100px;
    fill: #9b9b9b;
}

.tab-icon.qr {
    width: 90px;
    height: 92px;
    margin-top: 4px;
}

.tab-icon.calendar {
    height: 92px;
    margin-top: 4px;
    fill: #4d77a9;
}

.home-area {
    flex: 1;
    background-color: #fff;
    display: flex;
    justify-content: center;
    padding-top: 60px;
}

.home-indicator {
    width: 417px;
    height: 15px;
    border-radius: 8px;
    background-color: #000;
}
```
